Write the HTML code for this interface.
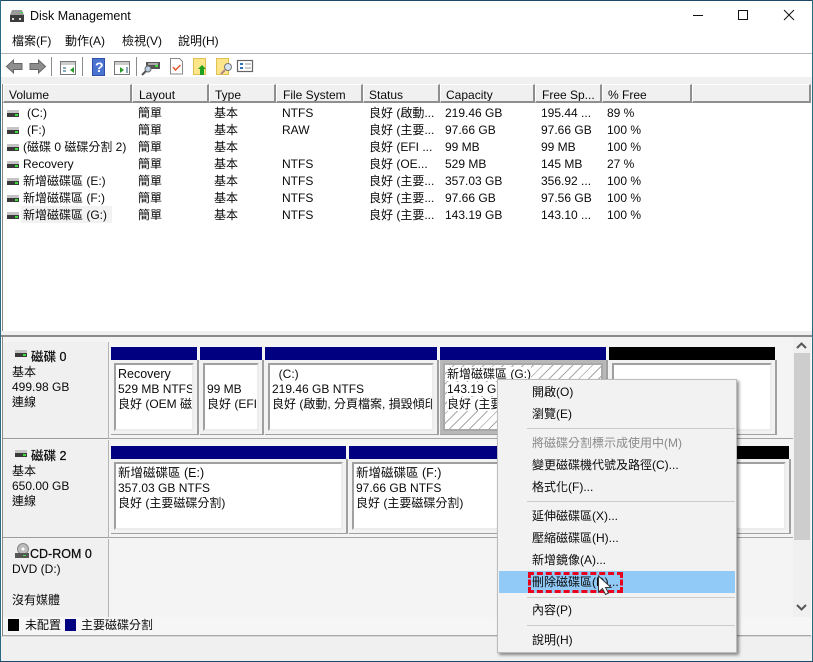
<!DOCTYPE html>
<html><head><meta charset="utf-8"><style>
*{box-sizing:border-box}
html,body{margin:0;padding:0;background:#fff}
body{width:813px;height:662px;position:relative;overflow:hidden;font:12px/15px "Liberation Sans","Noto Sans CJK TC",sans-serif;color:#0a0a0a}
.a{position:absolute}
.t{position:absolute;white-space:nowrap;overflow:hidden}
.h{position:absolute;top:84px;height:19px;background:#f0f0f0;border-right:2px solid #8f8f8f;border-bottom:2px solid #8f8f8f;border-left:1px solid #fff;border-top:1px solid #fff;padding:3px 0 0 6px;line-height:14px;white-space:nowrap;overflow:hidden}
.r{position:absolute;left:0;width:700px;height:17px}
.r span{position:absolute;top:1px;white-space:nowrap}
.c0{left:23px}.c1{left:138px}.c2{left:214px}.c3{left:282px}.c4{left:369px}.c5{left:445px}.c6{left:541px}.c7{left:607px}
.d{position:absolute;left:7px;width:12px;height:7px;top:5px;background:linear-gradient(#c4c4c4 0 3px,#3a3a3a 3px);}
.d:after{content:"";position:absolute;right:1px;bottom:1px;width:3px;height:2px;background:#3fdc3f}
.bar{position:absolute;height:13px;background:#000080}
.blk{background:#000}
.p{position:absolute;background:#f2f2f2;border-right:2px solid #a0a0a0;border-bottom:1px solid #a0a0a0;padding:3px 0 0 3px}
.b{position:relative;width:calc(100% - 3px);height:68px;background:#fff;border:2px solid;border-color:#a0a0a0 #ececec #ececec #a0a0a0;padding:2px 0 0 2px;overflow:hidden;white-space:nowrap;line-height:15px}
.m{position:absolute;left:34px;white-space:nowrap;height:15px;line-height:15px}
.s{position:absolute;left:29px;width:208px;height:1px;background:#cbcbcb}
.dk{position:absolute;left:3px;width:106px;background:#f0f0f0;border-right:1px solid #b4b4b4;border-bottom:1px solid #9c9c9c}
.lb{-webkit-text-stroke:.25px #111}
</style></head><body>
<div class="a" style="left:0;top:0;width:813px;height:1px;background:#1c4a68"></div>
<div class="a" style="left:0;top:0;width:1px;height:662px;background:#2a6a85"></div>
<div class="a" style="left:812px;top:0;width:1px;height:662px;background:#2a6a85"></div>
<div class="a" style="left:0;top:661px;width:813px;height:1px;background:#1c4a68"></div>

<svg class="a" style="left:9px;top:9px" width="16" height="14" viewBox="0 0 16 14"><path d="M3 1h10l2 5H1z" fill="#9a9a9a"/><rect x="1" y="6" width="14" height="7" fill="#3c3c3c"/><rect x="11" y="3" width="3" height="1" fill="#3fdc3f"/><rect x="3" y="9" width="2" height="2" fill="#ddd"/><rect x="10" y="9" width="2" height="2" fill="#ddd"/></svg>
<div class="t" style="left:30px;top:9px;font-size:12.5px">Disk Management</div>
<svg class="a" style="left:690px;top:8px" width="110" height="16" viewBox="0 0 110 16"><path d="M3 7.5h10" stroke="#111" fill="none"/><rect x="48.500" y="2.500" width="9" height="9" stroke="#111" fill="none"/><path d="M94 2l10 10M104 2l-10 10" stroke="#111" fill="none"/></svg>

<div class="t" style="left:12px;top:34px">檔案(F)</div>
<div class="t" style="left:65px;top:34px">動作(A)</div>
<div class="t" style="left:122px;top:34px">檢視(V)</div>
<div class="t" style="left:178px;top:34px">說明(H)</div>
<div class="a" style="left:1px;top:53px;width:811px;height:1px;background:#b4b4bc"></div>

<!-- toolbar -->
<svg class="a" style="left:4px;top:56px" width="262" height="22" viewBox="0 0 262 22">
<path d="M2.500 10.500l7-6.500v3.500h8.500v6H9.500V17z" fill="#8e8e8e" stroke="#666"/>
<path d="M41.500 10.500l-7-6.500v3.500H26v6h8.500V17z" fill="#8e8e8e" stroke="#666"/>
<path d="M47.500 1v19M78.500 1v19M132.500 1v19" stroke="#8c8c8c"/>
<rect x="56.500" y="5.500" width="15" height="13" fill="#fff" stroke="#777"/><rect x="57" y="6" width="14" height="3" fill="#ccc"/><path d="M70 11l-4 3 4 3z" fill="#2a9a2a"/><path d="M59 11h3v2h-3zM59 14h3v2h-3z" fill="#8ab"/>
<rect x="88" y="2" width="13" height="18" fill="#2f4fa8"/><rect x="89" y="3" width="11" height="16" fill="#4a74d0"/><text x="91" y="16" font-family="Liberation Sans" font-weight="bold" font-size="14" fill="#fff">?</text>
<rect x="110.500" y="5.500" width="15" height="13" fill="#fff" stroke="#777"/><rect x="111" y="6" width="14" height="3" fill="#ccc"/><path d="M116 11l4 3-4 3z" fill="#2a9a2a"/><path d="M122 11h2v6h-2z" fill="#8ab"/>
<rect x="142" y="6" width="14" height="7" fill="#555"/><rect x="144" y="7" width="10" height="2" fill="#aaa"/><rect x="151" y="9" width="3" height="2" fill="#3fdc3f"/><circle cx="144" cy="13" r="3" fill="#b8cde0" stroke="#666"/><path d="M142 15l-4 4" stroke="#555" stroke-width="2"/>
<path d="M166.500 2.500h9l3 3v12.500h-12z" fill="#fff" stroke="#888"/><path d="M169 11l2.500 3 5-5" stroke="#e05a30" stroke-width="1.500" fill="none"/>
<rect x="189.500" y="2.500" width="12" height="16" fill="#fde68a" stroke="#e0c050"/><path d="M198 9l4 4h-2v6h-4v-6h-2z" fill="#1fa01f"/>
<rect x="212.500" y="2.500" width="12" height="16" fill="#fde68a" stroke="#e0c050"/><circle cx="224" cy="11" r="3.500" fill="#d4e4f0" stroke="#777"/><path d="M221 14l-4 4" stroke="#a88" stroke-width="2"/>
<rect x="233.500" y="4.500" width="15" height="11" fill="#fff" stroke="#666" stroke-width="1.200"/><path d="M236 8h3M236 12h3" stroke="#3070c0" stroke-width="2"/><path d="M241 8h6M241 12h6" stroke="#999"/>
</svg>
<div class="a" style="left:1px;top:77px;width:811px;height:7px;background:#f0f0f0"></div>

<!-- list -->
<div class="a" style="left:2px;top:84px;width:1px;height:247px;background:#8a8a8a"></div>
<div class="h" style="left:3px;width:129px;padding-left:5px">Volume</div>
<div class="h" style="left:132px;width:77px">Layout</div>
<div class="h" style="left:209px;width:67px;padding-left:5px">Type</div>
<div class="h" style="left:276px;width:87px">File System</div>
<div class="h" style="left:363px;width:77px;padding-left:5px">Status</div>
<div class="h" style="left:440px;width:95px;padding-left:5px">Capacity</div>
<div class="h" style="left:535px;width:67px;padding-left:6px">Free Sp...</div>
<div class="h" style="left:602px;width:90px;padding-left:5px">% Free</div>
<div class="h" style="left:692px;width:119px"></div>

<div class="a" style="left:21px;top:206px;width:91px;height:17px;background:#f2f2f2"></div>

<div class="r" style="top:105px"><i class="d"></i><span class="c0" style="left:27px">(C:)</span><span class="c1">簡單</span><span class="c2">基本</span><span class="c3">NTFS</span><span class="c4">良好 (啟動...</span><span class="c5">219.46 GB</span><span class="c6">195.44 ...</span><span class="c7">89 %</span></div>
<div class="r" style="top:122px"><i class="d"></i><span class="c0" style="left:27px">(F:)</span><span class="c1">簡單</span><span class="c2">基本</span><span class="c3">RAW</span><span class="c4">良好 (主要...</span><span class="c5">97.66 GB</span><span class="c6">97.66 GB</span><span class="c7">100 %</span></div>
<div class="r" style="top:139px"><i class="d"></i><span class="c0">(磁碟 0 磁碟分割 2)</span><span class="c1">簡單</span><span class="c2">基本</span><span class="c4">良好 (EFI ...</span><span class="c5">99 MB</span><span class="c6">99 MB</span><span class="c7">100 %</span></div>
<div class="r" style="top:156px"><i class="d"></i><span class="c0">Recovery</span><span class="c1">簡單</span><span class="c2">基本</span><span class="c3">NTFS</span><span class="c4">良好 (OE...</span><span class="c5">529 MB</span><span class="c6">145 MB</span><span class="c7">27 %</span></div>
<div class="r" style="top:173px"><i class="d"></i><span class="c0">新增磁碟區 (E:)</span><span class="c1">簡單</span><span class="c2">基本</span><span class="c3">NTFS</span><span class="c4">良好 (主要...</span><span class="c5">357.03 GB</span><span class="c6">356.92 ...</span><span class="c7">100 %</span></div>
<div class="r" style="top:190px"><i class="d"></i><span class="c0">新增磁碟區 (F:)</span><span class="c1">簡單</span><span class="c2">基本</span><span class="c3">NTFS</span><span class="c4">良好 (主要...</span><span class="c5">97.66 GB</span><span class="c6">97.56 GB</span><span class="c7">100 %</span></div>
<div class="r" style="top:207px"><i class="d"></i><span class="c0">新增磁碟區 (G:)</span><span class="c1">簡單</span><span class="c2">基本</span><span class="c3">NTFS</span><span class="c4">良好 (主要...</span><span class="c5">143.19 GB</span><span class="c6">143.10 ...</span><span class="c7">100 %</span></div>

<!-- splitter -->
<div class="a" style="left:1px;top:331px;width:811px;height:6px;background:#f0f0f0;border-bottom:2px solid #8a8a8a"></div>

<!-- lower -->
<div class="a" style="left:2px;top:337px;width:791px;height:280px;background:#f4f4f4"></div>
<div class="a" style="left:2px;top:337px;width:1px;height:299px;background:#8a8a8a"></div>

<div class="dk" style="top:342px;height:97px"></div>
<div class="dk" style="top:440px;height:98px"></div>
<div class="dk" style="top:539px;height:78px;border-bottom:0"></div>
<div class="a" style="left:109px;top:537px;width:684px;height:1px;background:#a5a5a5"></div>
<div class="a" style="left:109px;top:438px;width:684px;height:1px;background:#a5a5a5"></div>

<i class="d" style="left:15px;top:350px"></i>
<div class="t lb" style="left:31px;top:349px;font-size:12.5px;padding-top:1px;height:16px">磁碟 0</div>
<div class="t" style="left:12px;top:365px">基本</div>
<div class="t" style="left:12px;top:380px">499.98 GB</div>
<div class="t" style="left:12px;top:395px">連線</div>

<i class="d" style="left:15px;top:450px"></i>
<div class="t lb" style="left:31px;top:448px;font-size:12.5px;padding-top:1px;height:16px">磁碟 2</div>
<div class="t" style="left:12px;top:464px">基本</div>
<div class="t" style="left:12px;top:479px">650.00 GB</div>
<div class="t" style="left:12px;top:494px">連線</div>

<svg class="a" style="left:14px;top:543px" width="16" height="16" viewBox="0 0 16 16"><circle cx="9" cy="6" r="5.500" fill="#bbb" stroke="#888"/><circle cx="9" cy="6" r="1.500" fill="#fff"/><rect x="1" y="10" width="14" height="5" fill="#555"/><rect x="9" y="12" width="3" height="1" fill="#3fdc3f"/></svg>
<div class="t lb" style="left:30px;top:547px;font-size:12.5px">CD-ROM 0</div>
<div class="t" style="left:12px;top:562px">DVD (D:)</div>
<div class="t" style="left:12px;top:593px">沒有媒體</div>

<!-- Disk 0 partitions -->
<div class="bar" style="left:111px;top:347px;width:86px"></div>
<div class="bar" style="left:200px;top:347px;width:62px"></div>
<div class="bar" style="left:265px;top:347px;width:172px"></div>
<div class="bar" style="left:440px;top:347px;width:166px"></div>
<div class="bar blk" style="left:609px;top:347px;width:166px"></div>
<div class="p" style="left:111px;top:360px;width:88px;height:75px"><div class="b"><span style="font-size:12.5px">Recovery</span><br>529 MB NTFS<br>良好 (OEM 磁</div></div>
<div class="p" style="left:200px;top:360px;width:64px;height:75px"><div class="b"><br>99 MB<br>良好 (EFI</div></div>
<div class="p" style="left:265px;top:360px;width:174px;height:75px"><div class="b">&nbsp; (C:)<br>219.46 GB NTFS<br>良好 (啟動, 分頁檔案, 損毀傾印</div></div>
<div class="p" style="left:440px;top:360px;width:168px;height:75px;background:#b8b8b8"><div class="b" style="border-color:#a8a8a8;background:repeating-linear-gradient(135deg,#fff 0 6px,#a8a8a8 6px 7px)"><span style="background:#fff">新增磁碟區 (G:)</span><br><span style="background:#fff">143.19 GB NTFS</span><br><span style="background:#fff">良好 (主要磁碟分割)</span></div></div>
<div class="p" style="left:609px;top:360px;width:168px;height:75px"><div class="b"></div></div>

<!-- Disk 2 partitions -->
<div class="bar" style="left:111px;top:446px;width:235px"></div>
<div class="bar" style="left:349px;top:446px;width:150px"></div>
<div class="bar blk" style="left:730px;top:446px;width:59px"></div>
<div class="p" style="left:111px;top:459px;width:237px;height:75px"><div class="b"><span style="font-size:12.5px">新增磁碟區 (E:)</span><br>357.03 GB NTFS<br>良好 (主要磁碟分割)</div></div>
<div class="p" style="left:349px;top:459px;width:391px;height:75px"><div class="b" style="margin-left:0"><span style="font-size:12.5px">新增磁碟區 (F:)</span><br>97.66 GB NTFS<br>良好 (主要磁碟分割)</div></div>
<div class="p" style="left:735px;top:459px;width:56px;height:75px;padding-left:0"><div class="b" style="border-left:0"></div></div>

<!-- scrollbar -->
<div class="a" style="left:793px;top:337px;width:18px;height:280px;background:#f0f0f0"></div>
<div class="a" style="left:794px;top:353px;width:16px;height:187px;background:#cdcdcd"></div>
<svg class="a" style="left:793px;top:337px" width="17" height="280" viewBox="0 0 17 280"><path d="M4 11l4.500-4.500L13 11" fill="none" stroke="#555" stroke-width="2"/><path d="M4 268l4.500 4.500L13 268" fill="none" stroke="#555" stroke-width="2"/></svg>

<!-- legend -->
<div class="a" style="left:3px;top:617px;width:808px;height:19px;background:#f6f6f6;border-bottom:1px solid #a8a8a8"></div>
<div class="a" style="left:8px;top:619px;width:11px;height:12px;background:#000"></div>
<div class="t" style="left:25px;top:618px">未配置</div>
<div class="a" style="left:65px;top:619px;width:11px;height:12px;background:#000080"></div>
<div class="t" style="left:81px;top:618px">主要磁碟分割</div>
<div class="a" style="left:1px;top:636px;width:811px;height:25px;background:#f0f0f0;border-top:1px solid #d8d8d8"></div>

<!-- menu -->
<div class="a" style="left:497px;top:379px;width:240px;height:274px;background:#f2f2f2;border:1px solid #bcbcbc;box-shadow:2px 2px 3px rgba(0,0,0,.45)">
<div class="a" style="left:1px;top:191px;width:236px;height:22px;background:#91c9f7"></div>
<div class="m" style="top:5px">開啟(O)</div>
<div class="m" style="top:27px">瀏覽(E)</div>
<div class="s" style="top:48px"></div>
<div class="m" style="top:56px;color:#8a8a8a">將磁碟分割標示成使用中(M)</div>
<div class="m" style="top:78px">變更磁碟機代號及路徑(C)...</div>
<div class="m" style="top:100px">格式化(F)...</div>
<div class="s" style="top:121px"></div>
<div class="m" style="top:129px">延伸磁碟區(X)...</div>
<div class="m" style="top:151px">壓縮磁碟區(H)...</div>
<div class="m" style="top:173px">新增鏡像(A)...</div>
<div class="m" style="top:195px">刪除磁碟區(D)...</div>
<div class="s" style="top:217px"></div>
<div class="m" style="top:223px">內容(P)</div>
<div class="s" style="top:245px"></div>
<div class="m" style="top:253px">說明(H)</div>
</div>
<div class="a" style="left:528px;top:572px;width:95px;height:21px;border:3px dashed #e8001c"></div>
<svg class="a" style="left:597px;top:575px" width="16" height="22" viewBox="0 0 16 22"><path d="M1.500 1v16l4-3.500 3 6 3-1.500-3-5.500h5.500z" fill="#fff" stroke="#333"/></svg>
</body></html>
